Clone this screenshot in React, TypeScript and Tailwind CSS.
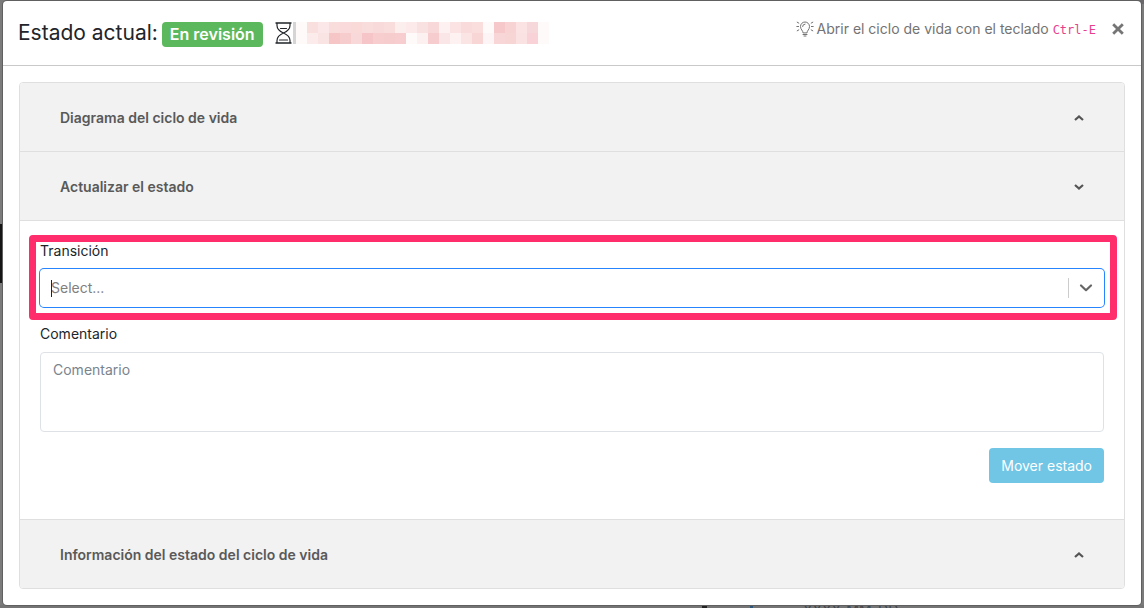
import { useState } from 'react'
import type { ReactNode } from 'react'

const redactedTop = [
    '#fefafa', '#fadfdf', '#fbe7e7', '#f9dcdc', '#fadada', '#fad9d9', '#f9dcdc', '#f9dadb', '#f9dcdc', '#fdeeee', '#fceaea', '#fae1e1',
    '#f8d8d9', '#fdf1f1', '#fbe3e3', '#f9dbdb', '#fadddd', '#fefafa', '#f7c8ca', '#f8d3d4', '#fbe3e4', '#f7d8da', '#fefafa',
]
const redactedBottom = [
    '#fefafa', '#fbebeb', '#fae3e3', '#f6c6c7', '#f7cccd', '#f9d8d9', '#f6c5c7', '#f7cdce', '#f7cccd', '#f7cdcf', '#fefafa', '#fdf0f0',
    '#f7ccce', '#fae6e7', '#fdf1f1', '#fbe4e4', '#f8d6d5', '#fdf4f5', '#f8d5d6', '#f8d5d5', '#fae1e2', '#f8d2d6', '#fefafa',
]

function HourglassIcon() {
    return (
        <svg width="18" height="24" viewBox="0 0 18 24" fill="none" stroke="#212529" strokeWidth="1.2" aria-hidden="true">
            <path d="M.5 2h16M.5 22h16" strokeWidth="1.600" />
            <path d="M2 2v2.500c0 3.500 2 5.500 6.500 7.500 4.500-2 6.500-4 6.500-7.500V2M2 22v-2.500c0-3.500 2-5.500 6.500-7.500 4.500 2 6.500 4 6.500 7.500V22" />
            <path d="M5.500 7.500h6M4.500 19h8" strokeLinecap="round" />
        </svg>
    )
}

function BulbIcon() {
    return (
        <svg width="18" height="16" viewBox="0 0 18 16" fill="none" stroke="#737373" strokeWidth="1" strokeLinecap="round" aria-hidden="true">
            <path d="M7 11.500c0-2-2.500-2.800-2.500-6a4.500 4.500 0 0 1 9 0c0 3.200-2.500 4-2.500 6zM7 13.500h4M8 15h2M6.600 5.500A2.400 2.400 0 0 1 9 3.100" />
            <path d="M.8 5.500h1.800M15.400 5.500h1.800M1.200 1.200l1.600.9M16.800 1.200l-1.600.9M1.200 9.800l1.600-.9M16.800 9.800l-1.600-.9" />
        </svg>
    )
}

function CloseIcon() {
    return (
        <svg width="12" height="12" viewBox="0 0 12 12" fill="none" stroke="#757575" strokeWidth="2.800" aria-hidden="true">
            <path d="M1.200 1.200l9.600 9.600M10.800 1.200l-9.600 9.600" />
        </svg>
    )
}

function Chevron({ down }: { down: boolean }) {
    return (
        <svg width="10" height="8" viewBox="0 0 10 8" fill="none" stroke="#555" strokeWidth="2.200" aria-hidden="true">
            <path d={down ? 'M1 2l4 3.600L9 2' : 'M1 6l4-3.600L9 6'} />
        </svg>
    )
}

type SectionProps = {
    title: string
    initialOpen?: boolean
    children?: ReactNode
}

function Section({ title, initialOpen = false, children }: SectionProps) {
    const [isOpen, setOpen] = useState(initialOpen)

    return (
        <section className="border-b border-[#dfdfdf] last:border-b-0">
            <h2>
                <button
                    type="button"
                    aria-expanded={isOpen}
                    onClick={() => setOpen(!isOpen)}
                    className="flex h-[68px] w-full items-center justify-between bg-[#f2f2f2] px-10 pt-[2px] text-left font-semibold text-[#595959]"
                >
                    {title}
                    <Chevron down={isOpen} />
                </button>
            </h2>
            {isOpen && children && <div className="border-t border-[#dfdfdf]">{children}</div>}
        </section>
    )
}

function Redacted() {
    return (
        <div className="flex items-center" aria-hidden="true">
            <div className="h-[22px] w-[3px] bg-[#d5d5d5]" />
            <div className="grid grid-cols-[repeat(23,11px)]">
                {[...redactedTop, ...redactedBottom].map((color, i) => (
                    <div key={i} className="h-[11px]" style={{ backgroundColor: color }} />
                ))}
            </div>
        </div>
    )
}

// The dimmed page that shows round the edges of the dialog
function Backdrop() {
    return (
        <div className="absolute inset-0 -z-10 flex flex-col justify-between overflow-hidden bg-[#7b7b7b]" aria-hidden="true">
            <div className="flex h-1">
                <div className="w-[58px]" />
                <div className="w-[480px] bg-[#6b5b1f]" />
                <div className="flex-1 bg-[#69676b]" />
            </div>
            <div className="mt-[220px] mb-auto h-[59px] w-1 bg-[#151515]" />
            <div className="flex h-[3px] items-start overflow-hidden bg-[#747474]">
                <div className="ml-[702px] h-[3px] w-[5px] bg-[#222]" />
                <div className="ml-[43px] h-[3px] w-[3px] bg-[#2c5578]" />
                <div className="ml-[50px] text-sm leading-[10px] text-[#3f444a]">YYYY-MM-DD</div>
            </div>
        </div>
    )
}

function App() {
    return (
        <div className="relative isolate min-h-screen px-[3px] pt-px pb-[3px] font-['Inter','Liberation_Sans',sans-serif] text-sm leading-5 text-[#212529]">
            <Backdrop />
            <div role="dialog" aria-labelledby="title" className="rounded bg-white shadow-[0_0_0_1px_#606060]">
                <header className="flex h-[65px] items-start justify-between border-b border-[#c9c9c9] pr-[13px] pl-[15px]">
                    <div className="flex h-16 items-center">
                        <h1 id="title" className="text-[21px] leading-6">
                            Estado actual:
                        </h1>
                        <span className="mt-[2px] mr-3 ml-1 rounded bg-[#5cb85c] px-2 py-[2px] text-base leading-[21px] font-semibold text-white">
                            En revisión
                        </span>
                        <HourglassIcon />
                        <Redacted />
                    </div>
                    <div className="flex h-14 items-center text-[#737373]">
                        <BulbIcon />
                        <span className="ml-[3px]">
                            Abrir el ciclo de vida con el teclado{' '}
                            <kbd className="font-['DejaVu_Sans_Mono',monospace] text-xs text-[#e83e8c]">Ctrl-E</kbd>
                        </span>
                        <button type="button" aria-label="Cerrar" className="ml-3 p-1">
                            <CloseIcon />
                        </button>
                    </div>
                </header>

                <main className="p-4">
                    <div className="overflow-hidden rounded border border-[#dfdfdf]">
                        <Section title="Diagrama del ciclo de vida" />
                        <Section title="Actualizar el estado" initialOpen>
                            <form className="px-5 pt-5 pb-9" onSubmit={(e) => e.preventDefault()}>
                                <div className="relative">
                                    <label htmlFor="transition" className="mb-2 block">
                                        Transición
                                    </label>
                                    <div className="relative flex items-center">
                                        <select
                                            id="transition"
                                            defaultValue=""
                                            className="h-[38px] w-full appearance-none rounded bg-white px-[11px] text-[#808080] ring-1 ring-[#2684ff] outline-none"
                                        >
                                            <option value="">Select...</option>
                                        </select>
                                        <span className="pointer-events-none absolute left-[11px] h-[17px] w-px bg-[#212529]" />
                                        <span className="pointer-events-none absolute right-0 flex h-5 w-9 items-center justify-center border-l border-[#ccc] pr-[2px]">
                                            <svg width="14" height="10" viewBox="0 0 14 10" fill="none" stroke="#666" strokeWidth="2.200" strokeLinecap="round" strokeLinejoin="round">
                                                <path d="M2 2.500l5 4.700 5-4.700" />
                                            </svg>
                                        </span>
                                    </div>
                                    <div className="pointer-events-none absolute -top-[6px] -right-[13px] -bottom-[13px] -left-[11px] rounded border-[7px] border-[#ff2d6c]" />
                                </div>

                                <label htmlFor="comment" className="mt-[17px] mb-2 block">
                                    Comentario
                                </label>
                                <textarea
                                    id="comment"
                                    placeholder="Comentario"
                                    className="block h-20 w-full resize-none rounded border border-[#dee2e6] px-3 py-[7px] placeholder:text-[#7a848e]"
                                />
                                <div className="mt-4 flex justify-end">
                                    <button type="submit" className="h-[35px] rounded bg-[#71c5e5] px-3 text-white">
                                        Mover estado
                                    </button>
                                </div>
                            </form>
                        </Section>
                        <Section title="Información del estado del ciclo de vida" />
                    </div>
                </main>
            </div>
        </div>
    )
}

export default App
